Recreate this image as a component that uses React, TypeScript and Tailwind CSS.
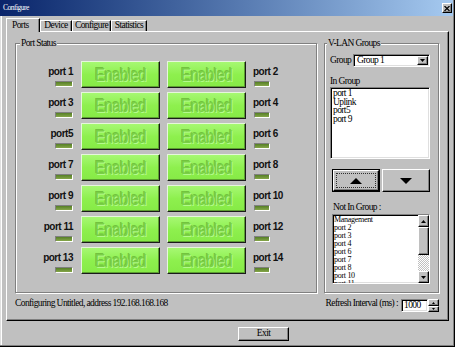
import React from "react";

const raised =
  "border border-t-white border-l-white border-r-black border-b-black shadow-[inset_-1px_-1px_0_#808080]";
const sunken =
  "border border-t-[#808080] border-l-[#808080] border-r-white border-b-white shadow-[inset_1px_1px_0_#000,inset_-1px_-1px_0_#dfdfdf]";
const etched = "border border-[#808080] shadow-[inset_1px_1px_0_#fff,1px_1px_0_#fff]";
const portFont =
  "inline-block font-['Liberation_Sans',sans-serif] font-bold text-[10px] leading-[12px] text-[#111] tracking-[-0.5px] scale-y-[1.12]";

const rows: [string, string][] = [
  ["port 1", "port 2"],
  ["port 3", "port 4"],
  ["port5", "port 6"],
  ["port 7", "port 8"],
  ["port 9", "port 10"],
  ["port 11", "port 12"],
  ["port 13", "port 14"],
];

function Led({ w }: { w: string }) {
  return (
    <div
      className={`${w} h-[6px] border border-t-[#808080] border-l-[#808080] border-r-white border-b-white bg-linear-to-b from-[#557f25] to-[#86a64a]`}
    />
  );
}

function EnabledBtn() {
  return (
    <div className="w-[79px] h-[27px] flex items-center justify-center border border-t-[#e6f6dc] border-l-[#e6f6dc] border-r-[#1a1a1a] border-b-[#1a1a1a] bg-linear-to-b from-[#a6f872] via-[#8ef04e] to-[#86ea46] shadow-[inset_-1px_-1px_0_#5c9e30]">
      <span className="inline-block scale-y-[1.2] font-['Liberation_Sans',sans-serif] text-[15px] leading-none tracking-[-0.6px] text-[#79cf45] [text-shadow:1px_1px_0_#b4fa8c,-1px_-1px_0_#72c23f]">
        Enabled
      </span>
    </div>
  );
}

function Tri({ dir, w, h }: { dir: "up" | "down"; w: number; h: number }) {
  const d = dir === "up" ? `M${w / 2} 0L${w} ${h}H0Z` : `M0 0H${w}L${w / 2} ${h}Z`;
  return (
    <svg width={w} height={h} viewBox={`0 0 ${w} ${h}`} className="block">
      <path d={d} fill="#000" />
    </svg>
  );
}

export default function App() {
  return (
    <div className="w-[455px] h-[347px] bg-[#c0c0c0] flex flex-col overflow-hidden font-['Liberation_Serif',serif] text-[9.5px] tracking-[-0.6px] text-black shadow-[inset_-1px_-1px_0_#000,inset_-2px_-2px_0_#808080,inset_1px_0_0_#dfdfdf,inset_2px_0_0_#fff]">
      {/* Title bar */}
      <div className="h-[16px] mr-[2px] flex items-center justify-between bg-linear-to-r from-[#0a246a] to-[#a6caf0] pl-[3px] pr-[1px]">
        <span className="text-[7.5px] tracking-[-0.5px] text-white leading-none">Configure</span>
        <div className={`w-[10px] h-[10px] ${raised} bg-[#c0c0c0] flex items-center justify-center`}>
          <svg width="6" height="5" viewBox="0 0 6 5" className="block">
            <path d="M0.5 0L5.5 5M5.5 0L0.5 5" stroke="#000" strokeWidth="1.2" />
          </svg>
        </div>
      </div>

      {/* Tabs */}
      <div className="h-[15px] flex items-end pl-[6px]">
        <div className="relative z-10 w-[34px] h-[14px] -mb-[1px] bg-[#c0c0c0] border-t border-l border-r border-t-white border-l-white border-r-black shadow-[inset_-1px_0_0_#808080] pl-[5px] flex items-center leading-none">
          Ports
        </div>
        <div className="w-[32px] h-[11px] border-t border-l border-r border-t-white border-l-white border-r-black shadow-[inset_-1px_0_0_#808080] flex items-center justify-center leading-none">
          Device
        </div>
        <div className="w-[39px] h-[11px] border-t border-l border-r border-t-white border-l-white border-r-black shadow-[inset_-1px_0_0_#808080] flex items-center justify-center leading-none">
          Configure
        </div>
        <div className="w-[36px] h-[11px] border-t border-l border-r border-t-white border-l-white border-r-black shadow-[inset_-1px_0_0_#808080] flex items-center justify-center leading-none">
          Statistics
        </div>
      </div>

      {/* Tab panel */}
      <div className={`mx-[6px] h-[290px] flex flex-col ${raised} pt-[11px] pl-[8px]`}>
        <div className="flex gap-[7px] h-[250px]">
          {/* Port Status */}
          <div className={`relative w-[302px] h-[250px] ${etched} pt-[17px] flex flex-col gap-[4px]`}>
            <span className="absolute -top-[6px] left-[4px] px-[1px] bg-[#c0c0c0] leading-[11px]">Port Status</span>
            {rows.map(([l, r]) => (
              <div key={l} className="flex h-[27px]">
                <div className="w-[58px] flex flex-col items-end pt-[5px] pr-[1px]">
                  <span className={portFont}>{l}</span>
                  <div className="mt-[3px]">
                    <Led w="w-[18px]" />
                  </div>
                </div>
                <div className="ml-[7px]">
                  <EnabledBtn />
                </div>
                <div className="ml-[7px]">
                  <EnabledBtn />
                </div>
                <div className="ml-[7px] flex flex-col items-start pt-[5px]">
                  <span className={portFont}>{r}</span>
                  <div className="mt-[3px] ml-[1px]">
                    <Led w="w-[16px]" />
                  </div>
                </div>
              </div>
            ))}
          </div>

          {/* V-LAN Groups */}
          <div className={`relative w-[115px] h-[250px] ${etched} pt-[10px] pl-[5px] pr-[8px] flex flex-col`}>
            <span className="absolute -top-[6px] left-[2px] px-[1px] bg-[#c0c0c0] leading-[11px]">V-LAN Groups</span>
            <div className="flex items-center justify-between h-[13px]">
              <span className="leading-none">Group</span>
              <div className={`w-[77px] h-[13px] ${sunken} bg-white flex items-center pl-[3px] pr-[1px]`}>
                <span className="flex-1 leading-none">Group 1</span>
                <div className={`w-[11px] h-[9px] ${raised} bg-[#c0c0c0] flex items-center justify-center`}>
                  <Tri dir="down" w={5} h={3} />
                </div>
              </div>
            </div>
            <span className="mt-[8px] leading-[12px]">In Group</span>
            <div className={`w-[100px] h-[72px] ${sunken} bg-white pl-[2px] pt-[1px] flex flex-col leading-[8.6px]`}>
              <span>port 1</span>
              <span>Uplink</span>
              <span>port5</span>
              <span>port 9</span>
            </div>
            <div className="mt-[10px] flex gap-[2px] pl-[2px]">
              <div className="w-[48px] h-[23px] border border-black">
                <div className={`w-full h-full ${raised} bg-[#c0c0c0] p-[2px]`}>
                  <div className="w-full h-full border border-dotted border-[#303030] flex items-center justify-center">
                    <Tri dir="up" w={12} h={6} />
                  </div>
                </div>
              </div>
              <div className={`w-[48px] h-[23px] ${raised} bg-[#c0c0c0] flex items-center justify-center`}>
                <Tri dir="down" w={12} h={6} />
              </div>
            </div>
            <span className="mt-[9px] ml-[3px] leading-[12px]">Not In Group :</span>
            <div className={`mt-[1px] ml-[2px] w-[98px] h-[70px] ${sunken} bg-white flex`}>
              <div className="flex-1 overflow-hidden pl-[1px] pt-[1px] flex flex-col text-[8px] tracking-[-0.3px] leading-[8px]">
                <span>Management</span>
                <span>port 2</span>
                <span>port 3</span>
                <span>port 4</span>
                <span>port 6</span>
                <span>port 7</span>
                <span>port 8</span>
                <span>port 10</span>
                <span>port 11</span>
              </div>
              <div className="w-[11px] flex flex-col">
                <div className={`h-[12px] ${raised} bg-[#c0c0c0] flex items-center justify-center`}>
                  <Tri dir="up" w={5} h={3} />
                </div>
                <div className={`h-[28px] ${raised} bg-[#c0c0c0]`} />
                <div className="flex-1 bg-[repeating-conic-gradient(#ffffff_0%_25%,#c0c0c0_0%_50%)] bg-[length:2px_2px]" />
                <div className={`h-[12px] ${raised} bg-[#c0c0c0] flex items-center justify-center`}>
                  <Tri dir="down" w={5} h={3} />
                </div>
              </div>
            </div>
          </div>
        </div>

        {/* Bottom row */}
        <div className="mt-[6px] w-[424px] h-[13px] flex justify-between items-start">
          <span className="leading-[9px]">Configuring Untitled, address 192.168.168.168</span>
          <div className="flex items-start">
            <span className="leading-[9px] mr-[3px]">Refresh Interval (ms) :</span>
            <div className={`w-[27px] h-[13px] ${sunken} bg-white flex items-center pl-[2px] leading-none`}>1000</div>
            <div className="w-[11px] h-[13px] flex flex-col">
              <div className={`h-[7px] ${raised} bg-[#c0c0c0] flex items-center justify-center`}>
                <Tri dir="up" w={3} h={2} />
              </div>
              <div className={`h-[6px] ${raised} bg-[#c0c0c0] flex items-center justify-center`}>
                <Tri dir="down" w={3} h={2} />
              </div>
            </div>
          </div>
        </div>
      </div>

      {/* Exit */}
      <div className={`mt-[6px] ml-[238px] w-[51px] h-[14px] ${raised} bg-[#c0c0c0] flex items-center justify-center leading-none`}>
        Exit
      </div>
    </div>
  );
}
